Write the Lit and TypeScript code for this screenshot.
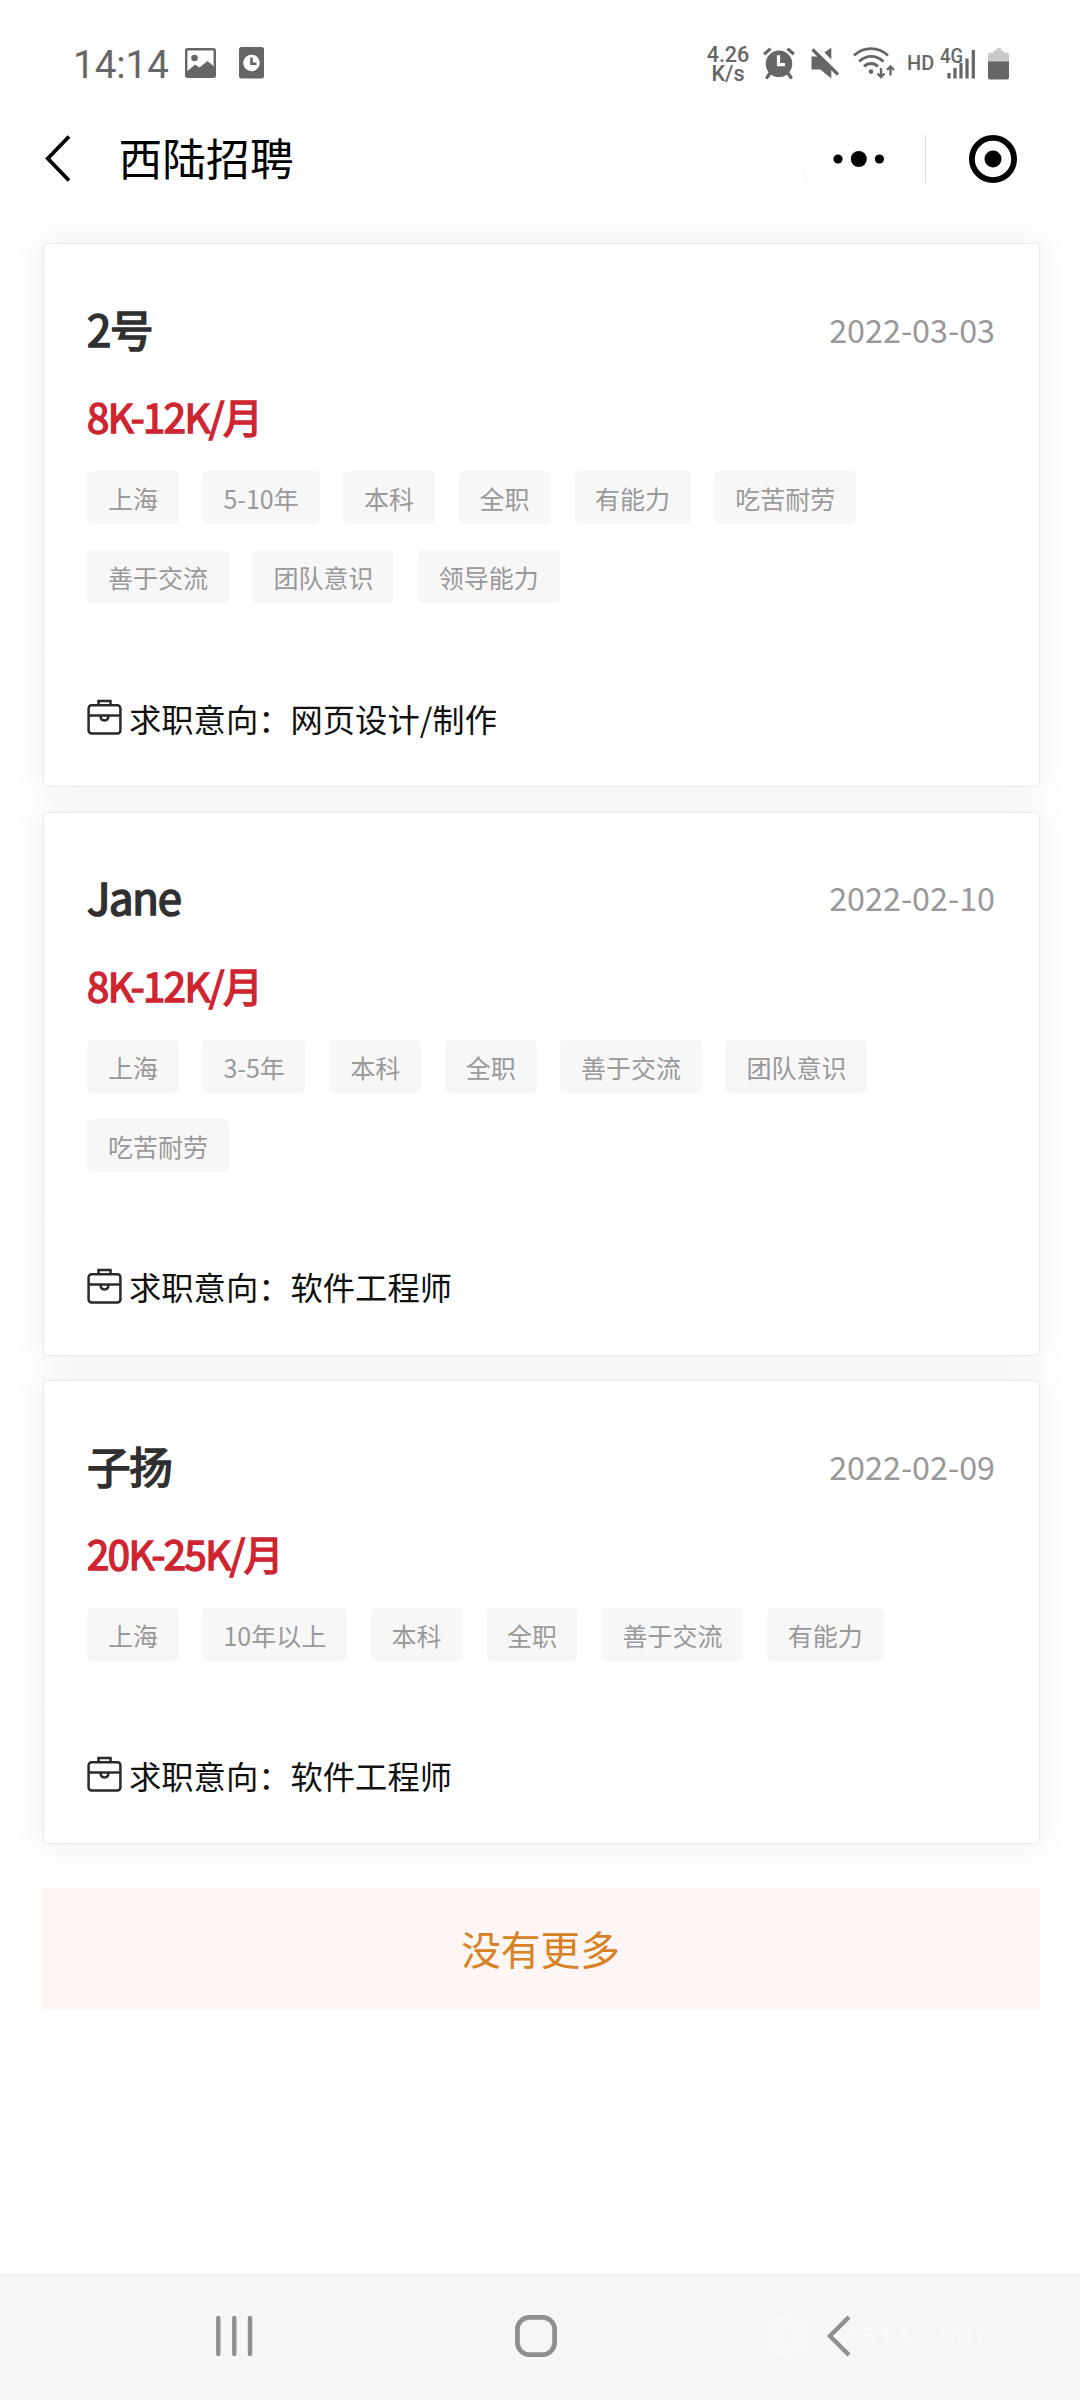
import { LitElement, html, css } from "lit";
import { customElement, property } from "lit/decorators.js";

const CJK = css`"Noto Sans CJK SC", "Noto Sans", sans-serif`;

interface Candidate {
  name: string;
  date: string;
  salary: string;
  rows: string[][];
  intent: string;
}

const CANDIDATES: Candidate[] = [
  {
    name: "2号",
    date: "2022-03-03",
    salary: "8K-12K/月",
    rows: [
      ["上海", "5-10年", "本科", "全职", "有能力", "吃苦耐劳"],
      ["善于交流", "团队意识", "领导能力"],
    ],
    intent: "网页设计/制作",
  },
  {
    name: "Jane",
    date: "2022-02-10",
    salary: "8K-12K/月",
    rows: [["上海", "3-5年", "本科", "全职", "善于交流", "团队意识"], ["吃苦耐劳"]],
    intent: "软件工程师",
  },
  {
    name: "子扬",
    date: "2022-02-09",
    salary: "20K-25K/月",
    rows: [["上海", "10年以上", "本科", "全职", "善于交流", "有能力"]],
    intent: "软件工程师",
  },
];

@customElement("status-bar")
export class StatusBar extends LitElement {
  static styles = css`
    :host {
      display: flex;
      justify-content: space-between;
      height: 102px;
      padding: 0 71px 0 73px;
      box-sizing: border-box;
      color: #666;
      font-family: Roboto, sans-serif;
    }
    .side {
      display: flex;
      align-items: center;
      padding-top: 24px;
    }
    .time {
      font-size: 38.5px;
      line-height: 46px;
      width: 112px;
      padding-top: 3px;
    }
    .speed {
      display: flex;
      flex-direction: column;
      align-items: center;
      font-size: 21.5px;
      line-height: 19px;
      font-weight: 500;
      width: 44px;
      margin-right: 13px;
      padding-top: 2px;
    }
    .hd {
      font-size: 20px;
      font-weight: 500;
      width: 32px;
    }
    svg {
      display: block;
      flex: none;
      overflow: visible;
    }
    .pic {
      margin-right: 23px;
    }
    .alarm {
      margin-right: 15px;
    }
    .mute {
      margin-right: 13px;
    }
    .wifi {
      margin-right: 12px;
    }
    .cell {
      margin-right: 12px;
    }
    .net {
      font: 500 20px Roboto, sans-serif;
    }
  `;
  render() {
    return html`
      <div class="side">
        <span class="time">14:14</span>
        <svg class="pic" width="31" height="30" viewBox="0 0 31 30" fill="#666">
          <rect x="1.2" y="1.2" width="28.6" height="27.6" rx="1.5" fill="none" stroke="#666" stroke-width="2.4" />
          <circle cx="9.5" cy="10" r="3.3" />
          <path d="M2 23.5L10 16.5L14.5 19.5L22.5 13L29 18.5V28H2Z" />
        </svg>
        <svg width="25" height="32" viewBox="0 0 25 32">
          <rect width="25" height="31.5" rx="2.5" fill="#666" />
          <circle cx="12.5" cy="16" r="8.3" fill="#fff" />
          <path d="M12.5 10.5V16.7H17.5" fill="none" stroke="#666" stroke-width="2.6" />
        </svg>
      </div>
      <div class="side">
        <div class="speed"><span>4.26</span><span>K/s</span></div>
        <svg class="alarm" width="32" height="32" viewBox="0 0 32 32">
          <g fill="none" stroke="#666" stroke-width="3.2">
            <path d="M1.2 7.2L7.5 1.6M30.8 7.2L24.5 1.6" />
            <path d="M7.5 25.5L4 30.5M24.5 25.5L28 30.5" stroke-linecap="round" />
          </g>
          <circle cx="16" cy="16.8" r="13.3" fill="#666" />
          <path d="M15.5 8.2V17.6H22" fill="none" stroke="#fff" stroke-width="3.2" />
        </svg>
        <svg class="mute" width="30" height="32" viewBox="0 0 30 32">
          <path d="M1.5 9.5H9L21.3 22V31.5L10.5 22.5H1.5ZM14.5 5.5L21.3 .5V12.5Z" fill="#666" />
          <path d="M2.5 2.5L28 27.5" stroke="#666" stroke-width="3.2" />
        </svg>
        <svg class="wifi" width="42" height="32" viewBox="0 0 42 32" fill="none" stroke="#666" stroke-width="2.8">
          <path d="M1 8.5C11 -.6 25 -.6 35 8.5M6 14.5C13.5 7.6 23 7.6 30.5 14.5M11 19.5C15 15.5 21 15.5 25 19.5" />
          <circle cx="18" cy="24.6" r="2.3" fill="#666" stroke="none" />
          <path d="M28 21V30M24.5 26.5L28 30L31.5 26.5M37.5 28.5V19.5M34 23L37.5 19.3L41 23" stroke-width="2.3" />
        </svg>
        <span class="hd">HD</span>
        <svg class="cell" width="37" height="32" viewBox="0 0 37 32">
          <text class="net" x="1" y="15.5" fill="#666" textLength="23" lengthAdjust="spacingAndGlyphs">4G</text>
          <path d="M10 26V31.5M16 21V31.5M22 16V31.5M28 11.5V31.5M34.3 3V31.5" stroke="#666" stroke-width="3.2" />
        </svg>
        <svg width="21" height="33" viewBox="0 0 21 33">
          <path d="M5.5 3.5H8.5V1H13V3.5H15.5V5.5H19Q21 5.5 21 8V15H0V8Q0 5.5 2 5.5H5.5Z" fill="#c9c9c9" />
          <path d="M0 14.5H21V30.5Q21 32.5 19 32.5H2Q0 32.5 0 30.5Z" fill="#666" />
        </svg>
      </div>
    `;
  }
}

@customElement("title-bar")
export class TitleBar extends LitElement {
  static styles = css`
    :host {
      display: flex;
      align-items: center;
      height: 113px;
      padding: 0 29px 0 45px;
      box-sizing: border-box;
    }
    svg {
      display: block;
    }
    .title {
      flex: 1;
      margin-left: 47.5px;
      padding-bottom: 3px;
      font: 400 43.8px/60px ${CJK};
      color: #000;
    }
    .capsule {
      display: flex;
      align-items: center;
      width: 250px;
      height: 84px;
      border: 1px solid #f8f8f8;
      border-radius: 44px;
      box-sizing: border-box;
    }
    .more {
      margin-left: 31px;
    }
    .line {
      width: 1px;
      height: 48px;
      margin: 0 43px 0 40px;
      background: #dadada;
    }
  `;
  render() {
    return html`
      <svg width="26" height="48" viewBox="0 0 26 48">
        <path d="M24 1.5L2.8 23.5L24 45.5" fill="none" stroke="#000" stroke-width="3.8" />
      </svg>
      <span class="title">西陆招聘</span>
      <div class="capsule">
        <svg class="more" width="52" height="18" viewBox="0 0 52 18">
          <circle cx="5" cy="9" r="4.6" />
          <circle cx="25.8" cy="9" r="8" />
          <circle cx="46.4" cy="9" r="4.6" />
        </svg>
        <span class="line"></span>
        <svg width="48" height="48" viewBox="0 0 48 48">
          <circle cx="24" cy="24" r="21.1" fill="none" stroke="#000" stroke-width="5.8" />
          <circle cx="24" cy="24" r="8.5" />
        </svg>
      </div>
    `;
  }
}

@customElement("candidate-card")
export class CandidateCard extends LitElement {
  @property({ attribute: false }) data!: Candidate;
  static styles = css`
    :host {
      display: flex;
      flex-direction: column;
      box-sizing: border-box;
      padding: 51px 44px 0 43px;
      border: 1px solid #ebebeb;
      border-radius: 3px;
      background: #fff;
      box-shadow: 0 0 36px rgba(0, 0, 0, 0.06);
      font-family: ${CJK};
    }
    .head {
      display: flex;
      justify-content: space-between;
      align-items: center;
      height: 66px;
    }
    .name {
      font-size: 43.5px;
      letter-spacing: -1.2px;
      color: #303030;
      -webkit-text-stroke: 1.7px #303030;
    }
    .date {
      font-size: 32.3px;
      padding-top: 1px;
      color: #999;
    }
    .salary {
      margin-top: 25px;
      height: 60px;
      font-size: 40px;
      line-height: 60px;
      letter-spacing: -1.5px;
      color: #cf2531;
      -webkit-text-stroke: 1.5px #cf2531;
    }
    .tags {
      display: flex;
      flex-direction: column;
      gap: 26px;
      margin-top: 25px;
    }
    .row {
      display: flex;
      gap: 23.4px;
    }
    .tag {
      height: 53px;
      padding: 0 21px;
      border-radius: 5px;
      background: #f7f7f7;
      color: #999;
      font-size: 25px;
      line-height: 54px;
      white-space: nowrap;
    }
    .intent {
      display: flex;
      align-items: center;
      margin: auto -27px 0 -43px;
      padding-left: 43px;
      height: 134px;
      border-top: 3px solid #fdfdfd;
      font-size: 32.3px;
      color: #111;
    }
    .intent span {
      padding-bottom: 3px;
    }
    svg {
      margin: 0 7px 4px 0;
      display: block;
    }
  `;
  render() {
    const d = this.data;
    return html`
      <div class="head"><span class="name">${d.name}</span><span class="date">${d.date}</span></div>
      <div class="salary">${d.salary}</div>
      <div class="tags">
        ${d.rows.map((r) => html`<div class="row">${r.map((t) => html`<span class="tag">${t}</span>`)}</div>`)}
      </div>
      <div class="intent">
        <svg width="35" height="36" viewBox="0 0 35 36" fill="none" stroke="#2a2a2a" stroke-width="2.5">
          <rect x="1.6" y="6.2" width="31.8" height="28.2" rx="3" />
          <path d="M11.5 6V2H23.5V6M1.6 16.5H33.4M13.5 16.5Q13.5 21.5 17.5 21.5Q21.5 21.5 21.5 16.5" />
        </svg>
        <span>求职意向：${d.intent}</span>
      </div>
    `;
  }
}

@customElement("system-nav")
export class SystemNav extends LitElement {
  static styles = css`
    :host {
      position: relative;
      display: flex;
      align-items: center;
      height: 127px;
      padding: 0 228px 2px 214px;
      background: #f6f6f6;
      box-sizing: border-box;
    }
    .home {
      margin: 0 auto 0 260px;
    }
    .mark {
      position: absolute;
      left: 766px;
      top: 38px;
      display: flex;
      align-items: center;
      gap: 17px;
      color: #f9f9f9;
      font: 700 26px/50px Lato, sans-serif;
      letter-spacing: 2.6px;
    }
    .front {
      position: relative;
    }
  `;
  render() {
    return html`
      <div class="mark">
        <svg width="43" height="50" viewBox="0 0 43 50">
          <path d="M21.5 1L42 13V37L21.5 49L1 37V13Z" fill="#f9f9f9" />
          <path d="M26 12L12 28H20L17 38L31 22H23Z" fill="#f6f6f6" />
        </svg>
        <span>FASTADMIN</span>
      </div>
      <svg width="40" height="44" viewBox="0 0 40 44" stroke="#8f8f8f" stroke-width="4.4" stroke-linecap="round">
        <path d="M4.3 4V40M20.3 4V40M36 4V40" />
      </svg>
      <svg class="home" width="44" height="44" viewBox="0 0 44 44" fill="none" stroke="#8f8f8f" stroke-width="4.8">
        <rect x="3.4" y="3.4" width="37.2" height="37.2" rx="12" />
      </svg>
      <svg class="front" width="26" height="44" viewBox="0 0 26 44" fill="none" stroke="#8f8f8f" stroke-width="4.4">
        <path d="M23 3L4 22L23 41" />
      </svg>
    `;
  }
}

@customElement("app-root")
export class AppRoot extends LitElement {
  static styles = css`
    :host {
      display: flex;
      flex-direction: column;
      width: 1080px;
      height: 2400px;
      overflow: hidden;
      background: #fefefe;
    }
    .list {
      display: flex;
      flex-direction: column;
      gap: 24.5px;
      padding: 28px 40px 0 43px;
    }
    .tall {
      height: 544px;
    }
    .short {
      height: 464px;
    }
    .end {
      display: flex;
      align-items: center;
      justify-content: center;
      height: 122px;
      box-sizing: border-box;
      padding: 0 2px 3px 0;
      margin: 44px 40px 0 43px;
      background: #fef6f4;
      color: #d88125;
      font: 400 39.7px/1 ${CJK};
    }
    .bottom {
      margin-top: auto;
    }
  `;
  render() {
    return html`
      <status-bar></status-bar>
      <title-bar></title-bar>
      <main class="list">
        ${CANDIDATES.map(
          (c) => html`<candidate-card class=${c.rows.length > 1 ? "tall" : "short"} .data=${c}></candidate-card>`,
        )}
      </main>
      <div class="end">没有更多</div>
      <system-nav class="bottom"></system-nav>
    `;
  }
}
